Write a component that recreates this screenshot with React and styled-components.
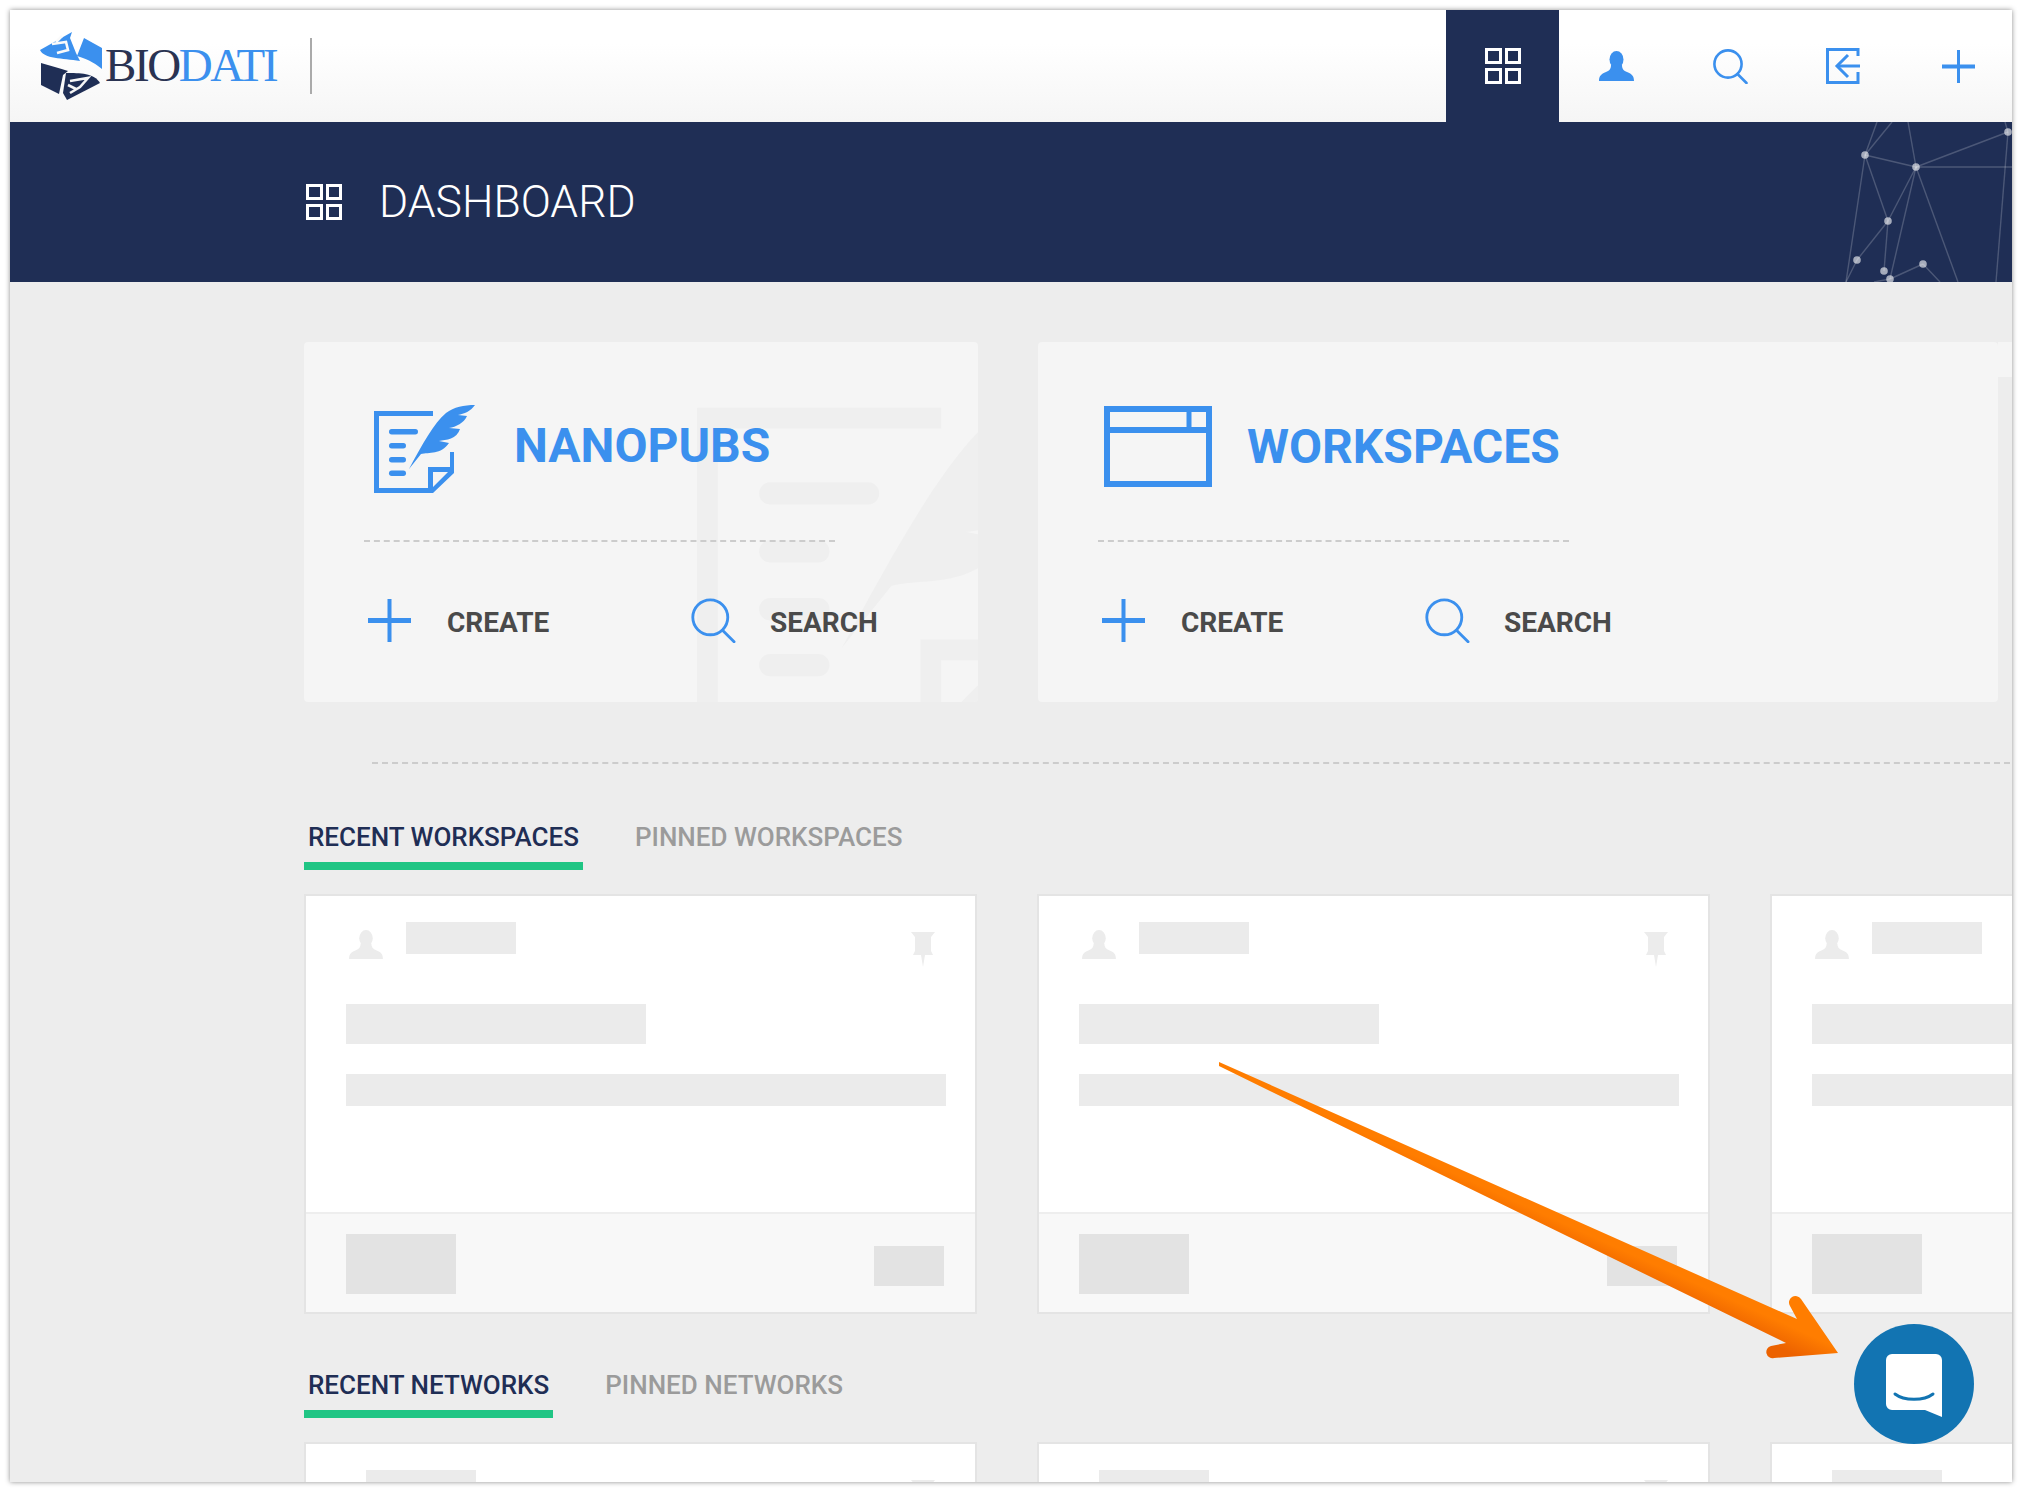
import React from "react";
import styled, { createGlobalStyle } from "styled-components";

const BLUE = "#3b90ee";
const NAVY = "#1f2e55";

const GlobalStyle = createGlobalStyle`
  html, body {
    margin: 0;
    padding: 0;
    background: #fff;
    font-family: Roboto, "Liberation Sans", sans-serif;
  }
`;

const GridIcon = ({ color = "#fff" }) => (
  <svg width="36" height="36" viewBox="0 0 36 36" fill="none" stroke={color} strokeWidth="3">
    <rect x="1.5" y="1.5" width="14" height="13" />
    <rect x="21.5" y="1.5" width="13" height="13" />
    <rect x="1.5" y="21.5" width="14" height="13" />
    <rect x="21.5" y="21.5" width="13" height="13" />
  </svg>
);

const UserIcon = ({ color = BLUE, width = 35, height = 30 }) => (
  <svg width={width} height={height} viewBox="0 0 35 30" fill={color}>
    <ellipse cx="17.5" cy="8.5" rx="7" ry="8.5" />
    <path d="M0 30C0 25 2 23 7 21C10 20 12 18 12 14L23 14C23 18 25 20 28 21C33 23 35 25 35 30Z" />
  </svg>
);

const SearchIcon = ({ size = 35, stroke = 2.6 }) => (
  <svg width={size} height={size} viewBox="0 0 35 35" fill="none" stroke={BLUE} strokeWidth={stroke} strokeLinecap="round">
    <circle cx="15" cy="15" r="13.6" />
    <path d="M24.5 25L33.5 34" />
  </svg>
);

const LoginIcon = () => (
  <svg width="36" height="36" viewBox="0 0 36 36" fill="none" stroke={BLUE} strokeWidth="3">
    <path d="M32 8V1.5H1.5V34.5H32V24" />
    <path d="M34 18H11" />
    <path d="M22 7L11 18L22 29" />
  </svg>
);

const PlusIcon = ({ size = 33, thick = 4 }) => (
  <svg width={size} height={size} viewBox={`0 0 ${size} ${size}`} fill={BLUE}>
    <rect x="0" y={(size - thick) / 2} width={size} height={thick} />
    <rect x={(size - thick + 1) / 2} y="0" width={thick - 1} height={size} />
  </svg>
);

const NanopubGlyph = ({ color, width, height }) => (
  <svg width={width} height={height} viewBox="0 0 101 88" fill={color}>
    <path fillRule="evenodd" d="M0 6H59V11H5V83H54V62H76V47H80V68L59 88H0ZM59 67H74L59 82Z" />
    <rect x="15" y="24" width="29" height="5.4" rx="2.7" />
    <rect x="15" y="38" width="17" height="5.4" rx="2.7" />
    <rect x="15" y="52" width="17" height="5.4" rx="2.7" />
    <rect x="15" y="65.5" width="17" height="5.4" rx="2.7" />
    <path d="M101 0C90 0 80 2 72 8C60 18 48 40 35 64L47 49C55 47 67 50 75 38L65 36C72 35 83 34 86 24L75 23C82 22 90 18 93 11L84 10C90 9 97 6 101 0Z" />
  </svg>
);

const WorkspaceGlyph = () => (
  <svg width="108" height="81" viewBox="0 0 108 81" fill="none" stroke={BLUE} strokeWidth="6">
    <rect x="3" y="3" width="102" height="75" />
    <path d="M3 24H105" />
    <path d="M85 3V24" strokeWidth="5" />
  </svg>
);

const PinIcon = () => (
  <svg width="24" height="36" viewBox="0 0 24 36" fill="#ececec">
    <path d="M0 1H24L20 6V20L22 24H14L12 36L10 24H2L4 20V6Z" />
  </svg>
);

const LogoMark = () => (
  <svg width="66" height="74" viewBox="8 5 66 74">
    <path d="M54 15L72 25V46C66 41 60 37 47 33Z" fill={BLUE} />
    <path d="M42 9L10 27C14 36 32 35 50 38L46 30L40 15Z" fill={BLUE} />
    <g fill="none" stroke="#fafafa" strokeWidth="2.6">
      <path d="M22 21L36 19L38 27L27 30" />
      <path d="M32 13L26 19" />
    </g>
    <path d="M11 40C20 43 30 45 38 48L33 52L29 71L11 62Z" fill={NAVY} />
    <path d="M36 50C50 50 64 50 70 60L37 77L33 70Z" fill={NAVY} />
    <g fill="none" stroke="#f6f6f6" strokeWidth="2.6">
      <path d="M40 58L58 55L50 64L40 70" />
      <path d="M46 66L38 62" />
    </g>
  </svg>
);

const NetworkArt = () => {
  const nodes = [[25, 33], [76, 45], [168, 10], [48, 99], [17, 138], [44, 149], [50, 157], [83, 142]];
  const lines = [
    [25, 33, 37, 0], [25, 33, 52, 0], [25, 33, 76, 45], [25, 33, 48, 99], [25, 33, 6, 160],
    [76, 45, 68, 0], [76, 45, 168, 10], [76, 45, 172, 45], [76, 45, 48, 99], [76, 45, 50, 157],
    [76, 45, 118, 160], [48, 99, 17, 138], [48, 99, 44, 149], [17, 138, 6, 160], [83, 142, 50, 157],
    [83, 142, 100, 160], [168, 10, 156, 160], [50, 157, 34, 160], [168, 10, 165, 0],
  ];
  return (
    <Art width="172" height="160" viewBox="0 0 172 160">
      {lines.map((l, i) => (
        <line key={i} x1={l[0]} y1={l[1]} x2={l[2]} y2={l[3]} stroke="#fff" strokeOpacity="0.2" strokeWidth="1.4" />
      ))}
      {nodes.map((n, i) => (
        <circle key={i} cx={n[0]} cy={n[1]} r="3.8" fill="#fff" fillOpacity="0.6" />
      ))}
    </Art>
  );
};

const Callout = () => (
  <Arrow width="640" height="310" viewBox="1210 1055 640 310">
    <defs>
      <linearGradient id="arrowFill" gradientUnits="userSpaceOnUse" x1="1792" y1="1327" x2="1782" y2="1349">
        <stop offset="0" stopColor="#ff7d00" />
        <stop offset="1" stopColor="#ec6200" />
      </linearGradient>
    </defs>
    <path
      d="M1219 1062L1797 1319L1790 1306A6 6 0 0 1 1801 1299L1838 1353L1774 1358A6 6 0 0 1 1771 1346L1786 1343L1219 1066Z"
      fill="url(#arrowFill)"
    />
  </Arrow>
);

const workspaceCards = [0, 1, 2];

const SkeletonCard = ({ network }) => (
  <Card>
    <CardBody>
      <CardTop $network={network}>
        {!network && (
          <AvatarSlot>
            <UserIcon color="#ececec" width={34} height={29} />
          </AvatarSlot>
        )}
        <Skeleton $w={110} $h={32} />
        <PinSlot>
          <PinIcon />
        </PinSlot>
      </CardTop>
      <TitleBar />
      <DescBar />
    </CardBody>
    <CardFooter>
      <Skeleton $w={110} $h={60} $dark />
      <FooterRight>
        <Skeleton $w={70} $h={40} $dark />
      </FooterRight>
    </CardFooter>
  </Card>
);

export default function App() {
  return (
    <>
      <GlobalStyle />
      <Frame>
        <Navbar>
          <Logo>
            <LogoMark />
            <LogoText>
              BIO<span>DATI</span>
            </LogoText>
          </Logo>
          <NavDivider />
          <NavItems>
            <NavItem $active>
              <GridIcon />
            </NavItem>
            <NavItem><UserIcon /></NavItem>
            <NavItem><SearchIcon /></NavItem>
            <NavItem><LoginIcon /></NavItem>
            <NavItem><PlusIcon /></NavItem>
          </NavItems>
        </Navbar>

        <Band>
          <GridIcon />
          <BandTitle>DASHBOARD</BandTitle>
          <NetworkArt />
        </Band>

        <Content>
          <HeroRow>
            <HeroCard $w={674} $clip>
              <Watermark>
                <NanopubGlyph color="#efefef" width={418} height={364} />
              </Watermark>
              <HeroHead $pad={10} $gap={39} $top={63}>
                <NanopubGlyph color={BLUE} width={101} height={88} />
                <HeroTitle>NANOPUBS</HeroTitle>
              </HeroHead>
              <Actions>
                <Action>
                  <PlusIcon size={43} thick={5} />
                  <ActionLabel>CREATE</ActionLabel>
                </Action>
                <Action $gap={34}>
                  <SearchIcon size={45} stroke={2.2} />
                  <ActionLabel>SEARCH</ActionLabel>
                </Action>
              </Actions>
            </HeroCard>
            <HeroCard $w={960} $tab>
              <HeroHead $pad={6} $gap={35} $top={64}>
                <WorkspaceGlyph />
                <HeroTitle>WORKSPACES</HeroTitle>
              </HeroHead>
              <Actions>
                <Action>
                  <PlusIcon size={43} thick={5} />
                  <ActionLabel>CREATE</ActionLabel>
                </Action>
                <Action $gap={34}>
                  <SearchIcon size={45} stroke={2.2} />
                  <ActionLabel>SEARCH</ActionLabel>
                </Action>
              </Actions>
            </HeroCard>
          </HeroRow>

          <Rule />

          <Tabs $top={51}>
            <Tab $active>RECENT WORKSPACES</Tab>
            <Tab>PINNED WORKSPACES</Tab>
          </Tabs>
          <CardRow>
            {workspaceCards.map((c) => (
              <SkeletonCard key={c} />
            ))}
          </CardRow>

          <Tabs $top={49}>
            <Tab $active>RECENT NETWORKS</Tab>
            <Tab>PINNED NETWORKS</Tab>
          </Tabs>
          <CardRow>
            {workspaceCards.map((c) => (
              <SkeletonCard key={c} network />
            ))}
          </CardRow>
        </Content>

        <Callout />
        <ChatButton>
          <svg width="58" height="64" viewBox="0 0 58 64">
            <path d="M6 0H50A6 6 0 0 1 56 6V63L39 56H6A6 6 0 0 1 0 50V6A6 6 0 0 1 6 0Z" fill="#fff" />
            <path d="M9 40C18 47 38 47 47 40" fill="none" stroke="#1274b2" strokeWidth="3" strokeLinecap="round" />
          </svg>
        </ChatButton>
      </Frame>
    </>
  );
}

const Frame = styled.div`
  position: relative;
  width: 2002px;
  height: 1472px;
  margin: 10px;
  overflow: hidden;
  background: #ededed;
  box-shadow: 0 0 5px rgba(0, 0, 0, 0.45);
`;

const Navbar = styled.div`
  display: flex;
  align-items: stretch;
  height: 112px;
  padding-left: 28px;
  background: linear-gradient(#fff 30%, #f5f5f5);
`;

const Logo = styled.div`
  display: flex;
  align-items: center;
  width: 272px;
  padding-bottom: 2px;
`;

const LogoText = styled.div`
  margin-left: 1px;
  font-family: "Liberation Serif", serif;
  font-size: 47px;
  letter-spacing: -2.4px;
  color: #2a3352;
  span {
    color: ${BLUE};
  }
`;

const NavDivider = styled.div`
  align-self: center;
  width: 2px;
  height: 56px;
  background: #aaa;
`;

const NavItems = styled.div`
  display: flex;
  margin-left: auto;
  margin-right: -3px;
`;

const NavItem = styled.div`
  display: flex;
  align-items: center;
  justify-content: center;
  width: ${(p) => (p.$active ? 113 : 114)}px;
  background: ${(p) => (p.$active ? NAVY : "transparent")};
`;

const Band = styled.div`
  position: relative;
  display: flex;
  align-items: center;
  gap: 37px;
  height: 160px;
  padding-left: 296px;
  background: ${NAVY};
  box-sizing: border-box;
`;

const BandTitle = styled.div`
  font-weight: 300;
  font-size: 44.5px;
  line-height: 1;
  color: #fff;
`;

const Art = styled.svg`
  position: absolute;
  right: 0;
  top: 0;
`;

const Content = styled.div`
  padding-left: 294px;
`;

const HeroRow = styled.div`
  display: flex;
  gap: 60px;
  margin-top: 60px;
`;

const HeroCard = styled.div`
  position: relative;
  flex: none;
  width: ${(p) => p.$w}px;
  height: 360px;
  padding-left: 60px;
  box-sizing: border-box;
  background: #f5f5f5;
  border-radius: 4px;
  overflow: ${(p) => (p.$clip ? "hidden" : "visible")};
  ${(p) =>
    p.$tab &&
    `&::after {
      content: "";
      position: absolute;
      top: 0;
      right: -14px;
      width: 14px;
      height: 35px;
      background: #f5f5f5;
    }`}
`;

const Watermark = styled.div`
  position: absolute;
  left: 393px;
  top: 41px;
`;

const HeroHead = styled.div`
  position: relative;
  display: flex;
  align-items: flex-start;
  gap: ${(p) => p.$gap}px;
  box-sizing: border-box;
  width: 471px;
  height: 200px;
  padding-top: ${(p) => p.$top}px;
  padding-left: ${(p) => p.$pad}px;
  border-bottom: 2px dashed #ccc;
`;

const HeroTitle = styled.div`
  margin-top: 17px;
  font-weight: 700;
  font-size: 48px;
  line-height: 1;
  color: ${BLUE};
`;

const Actions = styled.div`
  position: relative;
  display: flex;
  margin-top: 56px;
  padding-left: 4px;
`;

const Action = styled.div`
  display: flex;
  align-items: center;
  flex: none;
  width: 323px;
  gap: ${(p) => p.$gap || 36}px;
`;

const ActionLabel = styled.div`
  font-weight: 700;
  font-size: 28px;
  line-height: 1;
  padding-top: 5px;
  color: #4a4a4a;
`;

const Rule = styled.div`
  margin-top: 60px;
  margin-left: 68px;
  margin-right: 2px;
  border-top: 2px dashed #ccc;
`;

const Tabs = styled.div`
  display: flex;
  gap: 48px;
  margin-top: ${(p) => p.$top}px;
`;

const Tab = styled.div`
  box-sizing: border-box;
  height: 55px;
  padding: 0 4px;
  font-weight: 500;
  font-size: 26px;
  line-height: 44px;
  color: ${(p) => (p.$active ? NAVY : "#9b9b9b")};
  border-bottom: 8px solid ${(p) => (p.$active ? "#20c584" : "transparent")};
`;

const CardRow = styled.div`
  display: flex;
  gap: 60px;
  margin-top: 24px;
`;

const Card = styled.div`
  flex: none;
  display: flex;
  flex-direction: column;
  box-sizing: border-box;
  width: 673px;
  height: 420px;
  background: #fff;
  border: 2px solid #e4e4e4;
`;

const CardBody = styled.div`
  flex: 1;
  padding: 26px 29px 0 40px;
`;

const CardTop = styled.div`
  display: flex;
  align-items: flex-start;
  height: 32px;
  padding-left: ${(p) => (p.$network ? 20 : 3)}px;
`;

const AvatarSlot = styled.div`
  margin-top: 8px;
  margin-right: 23px;
  line-height: 0;
`;

const PinSlot = styled.div`
  margin-left: auto;
  margin-top: 9px;
  margin-right: 11px;
  line-height: 0;
`;

const Skeleton = styled.div`
  flex: none;
  width: ${(p) => p.$w}px;
  height: ${(p) => p.$h}px;
  background: ${(p) => (p.$dark ? "#e3e3e3" : "#ebebeb")};
`;

const TitleBar = styled.div`
  width: 300px;
  height: 40px;
  margin-top: 50px;
  background: #ebebeb;
`;

const DescBar = styled.div`
  width: 600px;
  height: 32px;
  margin-top: 30px;
  background: #ebebeb;
`;

const CardFooter = styled.div`
  display: flex;
  justify-content: space-between;
  box-sizing: border-box;
  height: 100px;
  padding: 20px 31px 0 40px;
  background: #f8f8f8;
  border-top: 2px solid #eee;
`;

const FooterRight = styled.div`
  margin-top: 12px;
`;

const Arrow = styled.svg`
  position: absolute;
  left: 1200px;
  top: 1045px;
`;

const ChatButton = styled.div`
  position: absolute;
  left: 1844px;
  top: 1314px;
  display: flex;
  align-items: center;
  justify-content: center;
  width: 120px;
  height: 120px;
  padding-left: 2px;
  padding-top: 4px;
  box-sizing: border-box;
  border-radius: 50%;
  background: #1274b2;
`;
